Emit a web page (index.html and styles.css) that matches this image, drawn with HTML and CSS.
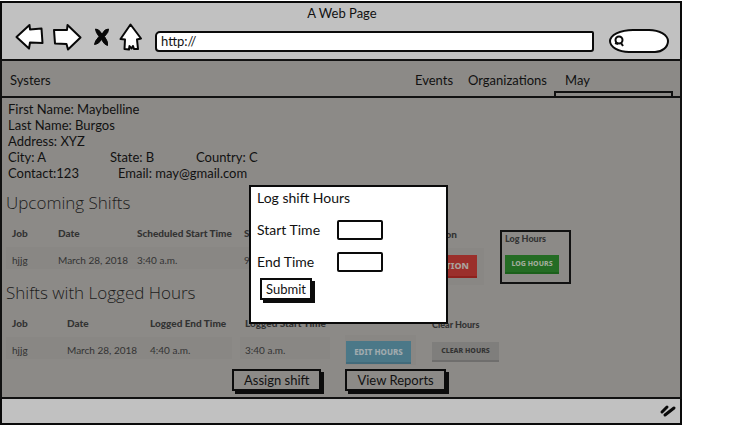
FILE: index.html
```html
<!DOCTYPE html>
<html lang="en">
<head>
<meta charset="utf-8">
<title>A Web Page</title>
<link rel="stylesheet" href="styles.css">
</head>
<body>
<div class="browser">
  <header class="chrome">
    <div class="title">A Web Page</div>
    <div class="toolbar">
      <button class="tool back" aria-label="Back"><svg width="30" height="28" viewBox="0 0 30 28"><path d="M1.500 14 L14.500 2 L15 6.500 L26.500 5.500 L27.500 20 L15 19.500 L14 25.500 Z"/></svg></button>
      <button class="tool forward" aria-label="Forward"><svg width="30" height="28" viewBox="0 0 30 28"><path d="M2 7 L15 7 L15.500 2 L28.500 14.500 L16 26.500 L14.500 21 L3 20.500 Z"/></svg></button>
      <button class="tool stop" aria-label="Stop"><svg width="18" height="22" viewBox="0 0 18 22"><path class="solid" d="M2.500 3 Q5.500 2.500 9 8 Q12 2.500 15.500 3 Q16 6 11.500 10.500 Q15.500 16 14.500 19.500 Q11.500 19 8.500 13.500 Q5.500 18.500 1.500 18.500 Q1.500 15.500 6 10.500 Q2.500 6 2.500 3 Z"/></svg></button>
      <button class="tool home" aria-label="Home"><svg width="24" height="28" viewBox="0 0 24 28"><path d="M11.500 1.500 L22 15.500 L18 16.500 L19 26 L15 26 L14 23 L12.500 25.500 L10.500 23 L10 26.500 L5.500 26 L6 16.500 L1.500 16 Z"/></svg></button>
      <input class="address" type="text" value="http://" aria-label="Address">
      <label class="search">
        <svg width="14" height="14" viewBox="0 0 14 14"><circle cx="6" cy="6" r="3.500"/><path d="M8 9 L10 12 M2 9 L5 10"/></svg>
        <input type="search" aria-label="Search">
      </label>
    </div>
  </header>
  <nav class="nav">
    <a class="brand" href="#">Systers</a>
    <a class="events" href="#">Events</a>
    <a class="orgs" href="#">Organizations</a>
    <div class="user"><a href="#">May</a><span class="menu-edge"></span></div>
  </nav>
  <main class="page">
    <div class="profile">
      <div>First Name: Maybelline</div>
      <div>Last Name: Burgos</div>
      <div>Address: XYZ</div>
      <div class="pair"><span class="city">City: A</span><span class="state">State: B</span><span>Country: C</span></div>
      <div class="pair"><span class="contact">Contact:123</span><span>Email: may@gmail.com</span></div>
    </div>
    <h2>Upcoming Shifts</h2>
    <section class="shifts">
      <table class="upcoming">
        <thead><tr><th class="job">Job</th><th class="date">Date</th><th class="start">Scheduled Start Time</th><th class="peek">S</th></tr></thead>
        <tbody><tr><td>hjjg</td><td>March 28, 2018</td><td>3:40 a.m.</td><td class="peek">9</td></tr></tbody>
      </table>
      <div class="action cancel"><b>on</b><div class="cell"><button class="red">TION</button></div></div>
      <div class="action log"><b>Log Hours</b><button class="green">LOG HOURS</button></div>
    </section>
    <h2>Shifts with Logged Hours</h2>
    <section class="shifts history">
      <table class="logged">
        <thead><tr><th class="job">Job</th><th class="date">Date</th><th>Logged End Time</th></tr></thead>
        <tbody><tr><td>hjjg</td><td>March 28, 2018</td><td>4:40 a.m.</td></tr></tbody>
      </table>
      <table class="logged-start">
        <thead><tr><th>Logged Start Time</th></tr></thead>
        <tbody><tr><td>3:40 a.m.</td></tr></tbody>
      </table>
      <div class="action edit"><div class="cell"><button class="blue">EDIT HOURS</button></div></div>
      <div class="action clear"><b>Clear Hours</b><button class="grey">CLEAR HOURS</button></div>
    </section>
    <div class="buttons"><button class="sketch">Assign shift</button><button class="sketch">View Reports</button></div>
  </main>
  <footer class="status"><svg width="18" height="16" viewBox="0 0 18 16"><path d="M3 9 L8 4 M6 12 L15 5"/></svg></footer>
  <form class="dialog" role="dialog" aria-labelledby="dialog-title">
    <div id="dialog-title">Log shift Hours</div>
    <div class="field"><label for="start">Start Time</label><input id="start" type="text"></div>
    <div class="field"><label for="end">End Time</label><input id="end" type="text"></div>
    <button class="sketch submit" type="button">Submit</button>
  </form>
</div>
</body>
</html>
```
FILE: styles.css
```css
* { box-sizing: border-box; }
body { margin: 0; background: #fff; color: #111; font: 13px/16px Lato, sans-serif; }
button, input { font: inherit; color: inherit; }
button { padding: 0; border: 0; white-space: nowrap; }
a { color: inherit; text-decoration: none; }
.browser { position: relative; width: calc(100% - 67px); padding-top: 1px; }

.chrome { border: 2px solid #0a0a0a; border-bottom: 0; background: #c1c1c1; padding: 2px 11px 6px 13px; }
.title { text-align: center; }
.toolbar { display: flex; align-items: center; height: 32px; }
.tool { background: none; display: flex; }
.tool path { fill: #fff; stroke: #080808; stroke-width: 2; stroke-linejoin: round; }
.tool .solid { fill: #080808; stroke-width: 1; }
.forward { margin-left: 7px; }
.stop { margin-left: 11px; }
.home { margin-left: 8px; }
.address { flex: 1; min-width: 0; height: 21px; margin: 8px 0 0 12px; padding: 0 4px; border: 2px solid #0a0a0a; border-radius: 5px 2px 3px 4px; background: #fff; }
.search { display: flex; align-items: center; width: 60px; height: 24px; margin: 8px 0 0 15px; padding-left: 2px; border: 2px solid #0a0a0a; border-radius: 24px 20px 14px 20px / 12px; background: #fff; }
.search svg { flex: none; fill: none; stroke: #0a0a0a; stroke-width: 2; }
.search input { width: 36px; border: 0; padding: 0; background: none; }

.nav { display: flex; align-items: center; height: 37px; padding: 2px 8px 0; border: 2px solid #111; border-bottom: 0; background: #8c8a87; }
.brand { margin-right: auto; }
.events { width: 53px; }
.orgs { width: 97px; }
.user { position: relative; width: 107px; }
.menu-edge { position: absolute; left: -11px; right: -1px; top: 19px; height: 5px; border: 2px solid #111; border-bottom: 0; }

.page { border: 2px solid #111; background: #8c8a87; padding: 3px 4px 2px; }
.profile { padding-left: 2px; }
.pair { display: flex; }
.city { width: 102px; }
.state { width: 86px; }
.contact { width: 110px; }
h2 { margin: 14px 0 0; font: 300 17px/16px "Open Sans", sans-serif; color: #1c1c1c; }
.shifts { display: flex; align-items: flex-start; height: 74px; padding-top: 13px; font-size: 10px; line-height: 14px; color: #333; }
.shifts.history { height: 68px; }
.shifts + h2 { margin-top: 0; }
.shifts table { flex: none; border-collapse: collapse; table-layout: fixed; }
.shifts th, .shifts td { padding: 0 6px; text-align: left; white-space: nowrap; }
.shifts th { height: 23px; padding-bottom: 6px; font-weight: 900; }
.shifts td { height: 22px; padding-top: 4px; background: #898784; }
.upcoming { width: 244px; }
.upcoming .job { width: 46px; }
.upcoming .date { width: 79px; }
.upcoming .start { width: 107px; }
.upcoming .peek { padding-right: 0; }
.logged { width: 226px; }
.logged .job { width: 55px; }
.logged .date { width: 83px; }
.logged-start { width: 90px; margin-left: 8px; }
.logged-start th, .logged-start td { padding-left: 5px; }

.action { display: flex; flex-direction: column; flex: none; }
.action b { font-weight: 900; }
.action button { font: 800 9px/18px "Noto Sans", sans-serif; }
.cell { background: #898784; }
.cancel { width: 142px; margin-left: 92px; }
.cancel b { padding: 3px 27px 0 0; text-align: right; }
.cancel .cell { display: flex; justify-content: flex-end; padding: 7px; margin-top: 7px; }
.red { width: 116px; height: 23px; border-bottom: 2px solid #8e211d; background: #9b2f2b; color: #aaa29e; text-align: right; }
.cancel .red { padding-right: 8px; }
.log { width: 71px; height: 54px; margin: 6px 0 0 16px; padding: 0 3px; border: 2px solid #111; font-size: 9px; }
.action .green { width: 54px; height: 19px; margin-top: 9px; border-bottom: 2px solid #1b601b; background: #246c24; color: #a0ab9b; font-size: 7px; line-height: 17px; }
.edit { margin: 21px 0 0 15px; }
.edit .cell { padding: 6px 5px 0 1px; height: 30px; }
.action .blue { width: 65px; height: 23px; border-bottom: 2px solid #426b7b; background: #4b7888; color: #a0aaae; font-size: 8px; }
.clear { margin: 4px 0 0 16px; font-size: 9px; }
.action .grey { width: 67px; height: 20px; margin-top: 10px; border-bottom: 2px solid #6f6e6d; background: #7f7e7c; color: #333; font-size: 7px; }

.buttons { display: flex; gap: 24px; height: 26px; margin-left: 226px; }
.sketch { height: 22px; padding: 0 9px; border: 2px solid #0c0c0c; background: transparent; box-shadow: 4px 3px 0 -1px #0c0c0c, 3px 3px 0 #0c0c0c; }
.buttons .sketch { padding: 0 10px; }

.status { display: flex; align-items: center; justify-content: flex-end; height: 26px; padding-right: 3px; border: 2px solid #0a0a0a; border-top: 0; background: #c1c1c1; }
.status svg { fill: none; stroke: #0a0a0a; stroke-width: 3; stroke-linecap: round; }

.dialog { position: absolute; left: 249px; top: 185px; width: 199px; height: 139px; padding: 3px 6px; border: 2px solid #0a0a0a; background: #fff; font-size: 14px; }
.field { display: flex; align-items: center; height: 32px; }
#dialog-title + .field { margin-top: 8px; }
.field label { width: 80px; }
.field input { width: 46px; height: 20px; border: 2px solid #0a0a0a; border-radius: 2px; background: #fff; }
.dialog .submit { display: block; margin: 0 0 0 3px; padding: 0 4px; font-size: 13px; }
```
